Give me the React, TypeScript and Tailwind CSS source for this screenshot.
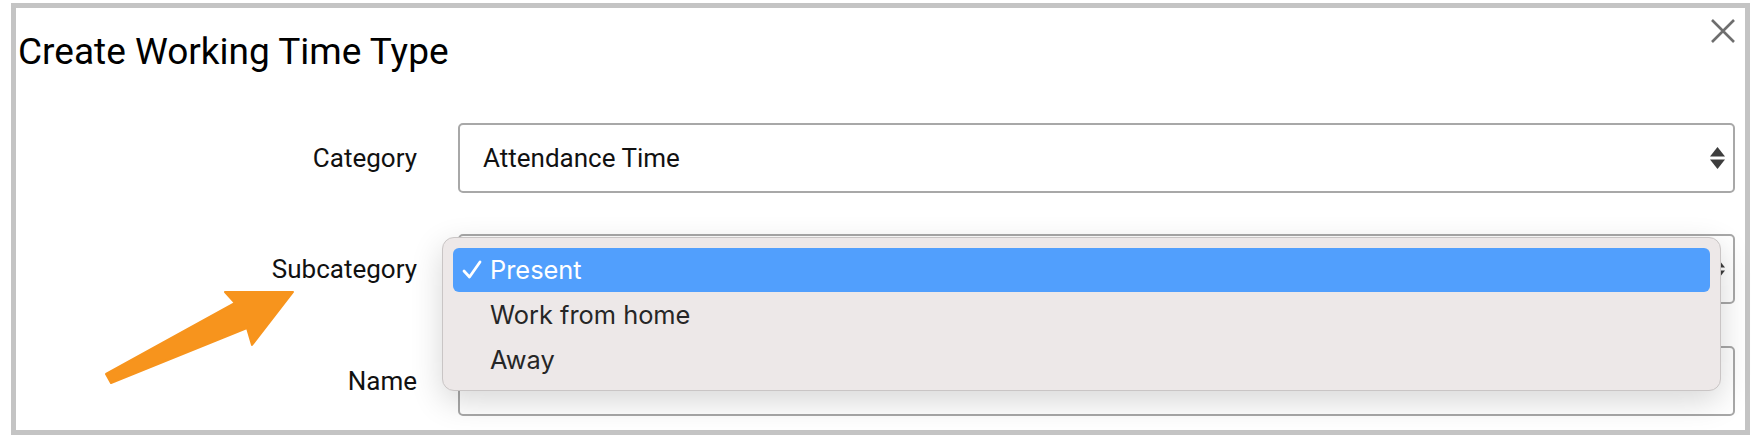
import React from "react";

function UpDown() {
  return (
    <svg width="15" height="22" viewBox="0 0 15 22" className="shrink-0">
      <polygon points="0,9.5 7.5,0 15,9.5" fill="#3d3d3d" />
      <polygon points="0,12.5 15,12.5 7.5,22" fill="#3d3d3d" />
    </svg>
  );
}

function Row({ label, children, className = "" }: { label: string; children: React.ReactNode; className?: string }) {
  return (
    <div className={`flex items-center h-[70px] ${className}`}>
      <div className="w-[401px] text-right text-[26px] leading-[30px] text-[#111]">{label}</div>
      <div className="ml-[41px] relative">{children}</div>
    </div>
  );
}

export default function App() {
  return (
    <div className="relative w-[1760px] h-[440px] bg-white overflow-hidden font-['Roboto',sans-serif]">
      <div className="pt-[3px] pl-[11px]">
        <div className="relative w-[1739px] h-[432px] border-[5px] border-[#c4c4c4] bg-white">
          <div className="flex justify-between items-start h-[70px]">
            <h1 className="pl-[2px] pt-[23px] text-[37px] leading-[42px] text-black">Create Working Time Type</h1>
            <button className="mt-[11px] mr-[10px] w-[24px] h-[24px]" aria-label="Close">
              <svg width="24" height="24" viewBox="0 0 24 24">
                <path d="M1 1 L23 23 M23 1 L1 23" stroke="#6e6e6e" strokeWidth="2.6" strokeLinecap="butt" />
              </svg>
            </button>
          </div>

          <div className="mt-[45px]">
            <Row label="Category">
              <div className="w-[1277px] h-[70px] border-2 border-[#a8a8a8] rounded-[5px] bg-white flex items-center justify-between pl-[23px] pr-[8px] text-[26px] text-[#111]">
                <span>Attendance Time</span>
                <UpDown />
              </div>
            </Row>

            <Row label="Subcategory" className="mt-[41px] relative z-10">
              <div className="w-[1277px] h-[70px] border-2 border-[#a8a8a8] rounded-[5px] bg-white flex items-center justify-end pl-[23px] pr-[8px]">
                <UpDown />
              </div>
              <div className="absolute left-[-16px] top-[3px] w-[1279px] rounded-[12px] border border-[#c9c5c5] bg-[#ede8e8] px-[10px] pt-[10px] pb-[7px] shadow-[0_10px_32px_rgba(0,0,0,0.16)] font-['Inter',sans-serif] text-[25.4px]">
                <div className="h-[44px] mb-[1px] flex items-center rounded-[6px] bg-[#519ffd] text-white">
                  <span className="w-[37px] flex justify-start pl-[9px]">
                    <svg width="20" height="20" viewBox="0 0 20 20">
                      <path d="M2 11 L7.5 17 L18 2" stroke="#fff" strokeWidth="2.8" fill="none" strokeLinecap="round" strokeLinejoin="round" />
                    </svg>
                  </span>
                  <span>Present</span>
                </div>
                <div className="h-[45px] flex items-center text-[#262626]">
                  <span className="w-[37px]" />
                  <span>Work from home</span>
                </div>
                <div className="h-[45px] flex items-center text-[#262626]">
                  <span className="w-[37px]" />
                  <span>Away</span>
                </div>
              </div>
            </Row>

            <Row label="Name" className="mt-[42px]">
              <div className="w-[1277px] h-[70px] border-2 border-[#a8a8a8] rounded-[5px] bg-white" />
            </Row>
          </div>
        </div>
      </div>

      <svg className="absolute left-0 top-0 pointer-events-none" width="1760" height="440" viewBox="0 0 1760 440">
        <path
          d="M106 374 L235 303 L225 292 L293 292 L252 345 L247 328 L111 383 Z"
          fill="#f7941d"
          stroke="#f7941d"
          strokeWidth="2"
          strokeLinejoin="round"
        />
      </svg>
    </div>
  );
}
